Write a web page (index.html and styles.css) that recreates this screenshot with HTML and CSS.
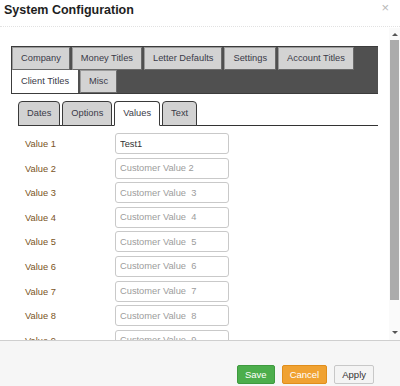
FILE: index.html
```html
<!DOCTYPE html>
<html lang="en">
<head>
  <meta charset="UTF-8">
  <title>System Configuration</title>
  <link rel="stylesheet" href="styles.css">
</head>
<body>
  <div class="dialog">
    <div class="header">
      <h1>System Configuration</h1>
      <span class="close">&times;</span>
    </div>

    <div class="body">
      <div class="content">
        <div class="tabset">
          <div class="tab">Company</div>
          <div class="tab">Money Titles</div>
          <div class="tab">Letter Defaults</div>
          <div class="tab">Settings</div>
          <div class="tab">Account Titles</div>
          <div class="tab active">Client Titles</div>
          <div class="tab">Misc</div>
        </div>

        <div class="subtabs">
          <div class="subtab">Dates</div>
          <div class="subtab">Options</div>
          <div class="subtab active">Values</div>
          <div class="subtab">Text</div>
        </div>

        <div class="form">
          <label>Value 1</label><input type="text" value="Test1">
          <label>Value 2</label><input type="text" placeholder="Customer Value 2">
          <label>Value 3</label><input type="text" placeholder="Customer Value  3">
          <label>Value 4</label><input type="text" placeholder="Customer Value  4">
          <label>Value 5</label><input type="text" placeholder="Customer Value  5">
          <label>Value 6</label><input type="text" placeholder="Customer Value  6">
          <label>Value 7</label><input type="text" placeholder="Customer Value  7">
          <label>Value 8</label><input type="text" placeholder="Customer Value  8">
          <label>Value 9</label><input type="text" placeholder="Customer Value  9">
        </div>
      </div>
      <!-- fake scrollbar, the dialog body scrolls in the original -->
      <div class="scrollbar">
        <span class="arrow up"></span>
        <span class="thumb"></span>
        <span class="arrow down"></span>
      </div>
    </div>

    <div class="footer">
      <button class="btn save">Save</button>
      <button class="btn cancel">Cancel</button>
      <button class="btn apply">Apply</button>
    </div>
  </div>
</body>
</html>
```

FILE: styles.css
```css
body {
  margin: 0;
  font-family: "Liberation Sans", Arial, sans-serif;
  font-size: 9.3px;
  color: #333;
  background: #fff;
}
.dialog {
  width: 400px;
  height: 386px;
  display: flex;
  flex-direction: column;
  overflow: hidden;
}
.header {
  height: 26px;
  border-bottom: 1px dotted #e2e2e2;
  display: flex;
  align-items: flex-start;
  justify-content: space-between;
  padding: 0 11px 0 4px;
}
.header h1 {
  margin: 3px 0 0;
  font-size: 12.5px;
  font-weight: bold;
  color: #1e1e1e;
}
.close {
  color: #b8b8b8;
  font-size: 13px;
  line-height: 13px;
  margin-top: 1px;
}
.body {
  height: 313px;
  display: flex;
  overflow: hidden;
}
.content {
  flex: 1;
  padding: 19px 11px 0 11px;
}
.tabset {
  display: flex;
  flex-wrap: wrap;
  column-gap: 2px;
  background: #505050;
  border: 1px solid #3c3c3c;
  border-right: none;
}
.tab {
  height: 21px;
  line-height: 21px;
  padding: 0 8px;
  background: #d3d3d3;
  border: 1px solid #9a9a9a;
  border-right-color: #6a6a6a;
  border-bottom-color: #6a6a6a;
  color: #3a3a48;
}
.tab.active {
  background: #fff;
  border-color: #fff;
}
.subtabs {
  display: flex;
  gap: 2px;
  margin: 7px 0 0 7px;
  border-bottom: 1px solid #333;
}
.subtab {
  height: 23px;
  line-height: 23px;
  padding: 0 8px;
  margin-bottom: -1px;
  background: #d2d2d2;
  border: 1px solid #3a3a3a;
  border-radius: 4px 4px 0 0;
  color: #3a3a48;
}
.subtab.active {
  background: #fff;
  border-bottom-color: #fff;
}
.form {
  display: grid;
  grid-template-columns: 90px 114px;
  row-gap: 3.6px;
  align-items: center;
  margin-top: 7px;
  padding-left: 14px;
}
.form label {
  color: #7a5424;
  padding-top: 1px;
}
.form input {
  box-sizing: border-box;
  width: 114px;
  height: 21px;
  padding: 0 4px;
  border: 1px solid #c9c9c9;
  border-radius: 3px;
  font-family: inherit;
  font-size: 9.3px;
  color: #333;
  background: #fff;
  outline: none;
}
.form input::placeholder {
  color: #9c9c9c;
}
.scrollbar {
  width: 11px;
  margin-top: 1px;
  display: flex;
  flex-direction: column;
  align-items: center;
  background: #fafafa;
}
.arrow {
  width: 0;
  height: 0;
  border-left: 3px solid transparent;
  border-right: 3px solid transparent;
}
.arrow.up {
  margin-top: 5px;
  border-bottom: 3px solid #555;
}
.arrow.down {
  margin-top: auto;
  margin-bottom: 6px;
  border-top: 3px solid #555;
}
.thumb {
  width: 9px;
  height: 260px;
  margin-top: 4px;
  background: #acacac;
}
.footer {
  flex: 1;
  border-top: 1px solid #cfcfcf;
  background: #f6f6f6;
  display: flex;
  justify-content: flex-end;
  align-items: flex-end;
  gap: 7px;
  padding: 0 26px 2px 0;
}
.btn {
  height: 19px;
  padding: 0 7px;
  border-radius: 2px;
  border: 1px solid;
  font-family: inherit;
  font-size: 9.5px;
  cursor: pointer;
}
.save {
  background: #4cae4c;
  border-color: #3f9a3f;
  color: #fff;
}
.cancel {
  background: #f0a232;
  border-color: #e08e1c;
  color: #fff;
}
.apply {
  background: #f4f4f4;
  border-color: #c8c8c8;
  color: #333;
}
```
